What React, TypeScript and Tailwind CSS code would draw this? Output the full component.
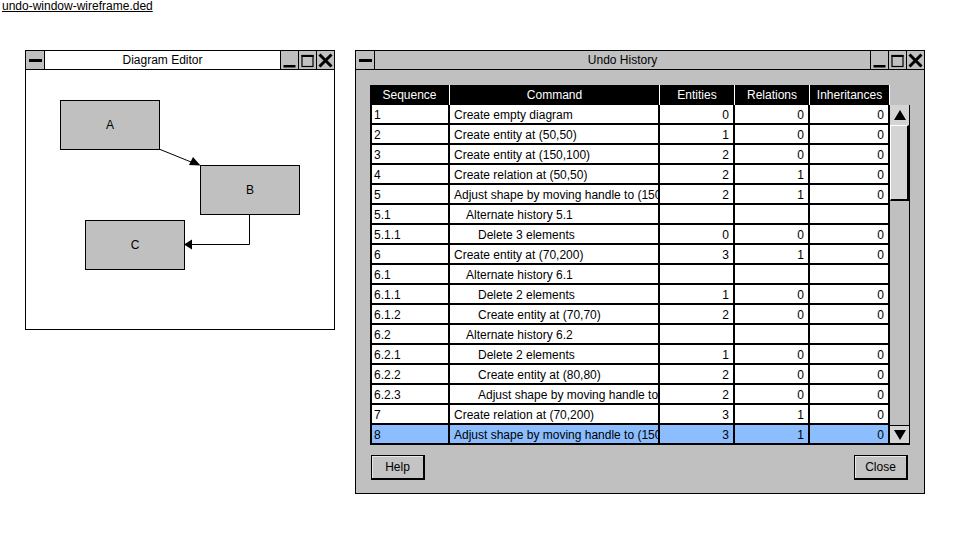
import React from 'react';

type Row = {
  seq: string;
  cmd: string;
  level: number;
  e?: string;
  r?: string;
  i?: string;
  selected?: boolean;
};

const rows: Row[] = [
  { seq: '1', cmd: 'Create empty diagram', level: 0, e: '0', r: '0', i: '0' },
  { seq: '2', cmd: 'Create entity at (50,50)', level: 0, e: '1', r: '0', i: '0' },
  { seq: '3', cmd: 'Create entity at (150,100)', level: 0, e: '2', r: '0', i: '0' },
  { seq: '4', cmd: 'Create relation at (50,50)', level: 0, e: '2', r: '1', i: '0' },
  { seq: '5', cmd: 'Adjust shape by moving handle to (150,100)', level: 0, e: '2', r: '1', i: '0' },
  { seq: '5.1', cmd: 'Alternate history 5.1', level: 1 },
  { seq: '5.1.1', cmd: 'Delete 3 elements', level: 2, e: '0', r: '0', i: '0' },
  { seq: '6', cmd: 'Create entity at (70,200)', level: 0, e: '3', r: '1', i: '0' },
  { seq: '6.1', cmd: 'Alternate history 6.1', level: 1 },
  { seq: '6.1.1', cmd: 'Delete 2 elements', level: 2, e: '1', r: '0', i: '0' },
  { seq: '6.1.2', cmd: 'Create entity at (70,70)', level: 2, e: '2', r: '0', i: '0' },
  { seq: '6.2', cmd: 'Alternate history 6.2', level: 1 },
  { seq: '6.2.1', cmd: 'Delete 2 elements', level: 2, e: '1', r: '0', i: '0' },
  { seq: '6.2.2', cmd: 'Create entity at (80,80)', level: 2, e: '2', r: '0', i: '0' },
  { seq: '6.2.3', cmd: 'Adjust shape by moving handle to (80,80)', level: 2, e: '2', r: '0', i: '0' },
  { seq: '7', cmd: 'Create relation at (70,200)', level: 0, e: '3', r: '1', i: '0' },
  { seq: '8', cmd: 'Adjust shape by moving handle to (150,100)', level: 0, e: '3', r: '1', i: '0', selected: true },
];

const indent = ['pl-[4px]', 'pl-[16px]', 'pl-[28px]'];

const WinButton = ({ kind }: { kind: 'min' | 'max' | 'close' }) => (
  <div className="w-[18px] border-l border-black bg-[#c0c0c0] flex items-center justify-center">
    <svg width="17" height="18" viewBox="0 0 17 18">
      {kind === 'min' && <rect x="2.5" y="14" width="12" height="2.5" fill="#000" />}
      {kind === 'max' && (
        <>
          <rect x="3" y="4.5" width="11" height="11" fill="none" stroke="#000" strokeWidth="1.2" />
          <rect x="2.5" y="4" width="12" height="2" fill="#000" />
        </>
      )}
      {kind === 'close' && (
        <path d="M2.5 3.5 L14.5 15.5 M14.5 3.5 L2.5 15.5" stroke="#000" strokeWidth="3" />
      )}
    </svg>
  </div>
);

const TitleBar = ({ title, white }: { title: string; white?: boolean }) => (
  <div className="flex h-[19px] border-b border-black shrink-0">
    <div className="w-[19px] border-r border-black bg-[#c0c0c0] flex items-center justify-center">
      <div className="w-[13px] h-[3px] bg-black" />
    </div>
    <div
      className={`flex-1 flex items-center justify-center text-[12px] ${white ? 'bg-white' : 'bg-[#c0c0c0]'}`}
    >
      {title}
    </div>
    <WinButton kind="min" />
    <WinButton kind="max" />
    <WinButton kind="close" />
  </div>
);

const DiagramBox = ({ label, className }: { label: string; className: string }) => (
  <div
    className={`absolute w-[100px] h-[50px] bg-[#c0c0c0] border border-black flex items-center justify-center text-[12px] ${className}`}
  >
    {label}
  </div>
);

const Arrowhead = ({ up }: { up?: boolean }) => (
  <svg width="14" height="12" viewBox="0 0 14 12">
    {up ? (
      <polygon points="7,1 13,11 1,11" fill="#000" />
    ) : (
      <polygon points="1,1 13,1 7,11" fill="#000" />
    )}
  </svg>
);

const PushButton = ({ label }: { label: string }) => (
  <button className="w-[54px] h-[25px] bg-[#c4c4c4] border-t border-l border-black border-r-2 border-b-2 text-[12px] shadow-[inset_1px_1px_0_#e8e8e8]">
    {label}
  </button>
);

export default function App() {
  return (
    <div className="w-[960px] h-[547px] bg-white text-black font-['Liberation_Sans',Arial,sans-serif] overflow-hidden">
      <div className="pl-[2px] h-[14px] leading-[13px] text-[12px] underline">undo-window-wireframe.ded</div>

      <div className="flex items-start gap-[20px] pl-[25px] mt-[36px]">
        {/* Diagram Editor */}
        <div className="w-[310px] h-[280px] border border-black flex flex-col bg-white">
          <TitleBar title="Diagram Editor" white />
          <div className="relative flex-1">
            <svg className="absolute inset-0" width="308" height="259">
              <line x1="133" y1="79" x2="170" y2="94" stroke="#000" strokeWidth="1" />
              <polygon points="174.5,95.5 163,95 167,87" fill="#000" />
              <polyline points="223.5,144 223.5,174.5 162,174.5" fill="none" stroke="#000" strokeWidth="1" />
              <polygon points="158,174.5 166,169.5 166,179.5" fill="#000" />
            </svg>
            <DiagramBox label="A" className="left-[34px] top-[30px]" />
            <DiagramBox label="B" className="left-[174px] top-[95px]" />
            <DiagramBox label="C" className="left-[59px] top-[150px]" />
          </div>
        </div>

        {/* Undo History */}
        <div className="w-[570px] h-[444px] border border-black flex flex-col bg-[#c0c0c0]">
          <TitleBar title="Undo History" />
          <div className="pl-[14px] pt-[15px]">
            {/* header */}
            <div className="flex h-[20px] text-[12px] text-white">
              <div className="w-[80px] bg-black border-r border-white flex items-center justify-center">Sequence</div>
              <div className="w-[210px] bg-black border-r border-white flex items-center justify-center">Command</div>
              <div className="w-[75px] bg-black border-r border-white flex items-center justify-center">Entities</div>
              <div className="w-[75px] bg-black border-r border-white flex items-center justify-center">Relations</div>
              <div className="w-[80px] bg-black border-r border-white flex items-center justify-center">Inheritances</div>
            </div>

            <div className="flex">
              <div className="w-[520px] border-l-2 border-black text-[12px]">
                {rows.map((row) => {
                  const bg = row.selected ? 'bg-[#8bbdff]' : 'bg-white';
                  return (
                    <div key={row.seq} className={`flex h-[20px] ${bg}`}>
                      <div className="w-[78px] border-r-2 border-b-2 border-black pl-[2px] pt-[2px] flex items-center">
                        {row.seq}
                      </div>
                      <div
                        className={`w-[210px] border-r-2 border-b-2 border-black pt-[2px] flex items-center overflow-hidden whitespace-nowrap ${indent[row.level]}`}
                      >
                        {row.cmd}
                      </div>
                      <div className="w-[75px] border-r-2 border-b-2 border-black pr-[4px] pt-[2px] flex items-center justify-end">
                        {row.e}
                      </div>
                      <div className="w-[75px] border-r-2 border-b-2 border-black pr-[4px] pt-[2px] flex items-center justify-end">
                        {row.r}
                      </div>
                      <div className="w-[80px] border-r-2 border-b-2 border-black pr-[4px] pt-[2px] flex items-center justify-end">
                        {row.i}
                      </div>
                    </div>
                  );
                })}
              </div>

              {/* scrollbar */}
              <div className="w-[20px] h-[340px] border-r border-black flex flex-col">
                <div className="h-[20px] bg-[#d4d4d4] flex items-center justify-center">
                  <Arrowhead up />
                </div>
                <div className="h-[76px] bg-[#d4d4d4] border-t border-l border-white border-r-2 border-b-2 border-r-black border-b-black" />
                <div className="flex-1" />
                <div className="h-[20px] bg-[#d4d4d4] border-t border-b-2 border-black flex items-center justify-center">
                  <Arrowhead />
                </div>
              </div>
            </div>

            <div className="flex justify-between w-[540px] mt-[10px] pl-[1px] pr-[2px]">
              <PushButton label="Help" />
              <PushButton label="Close" />
            </div>
          </div>
        </div>
      </div>
    </div>
  );
}
